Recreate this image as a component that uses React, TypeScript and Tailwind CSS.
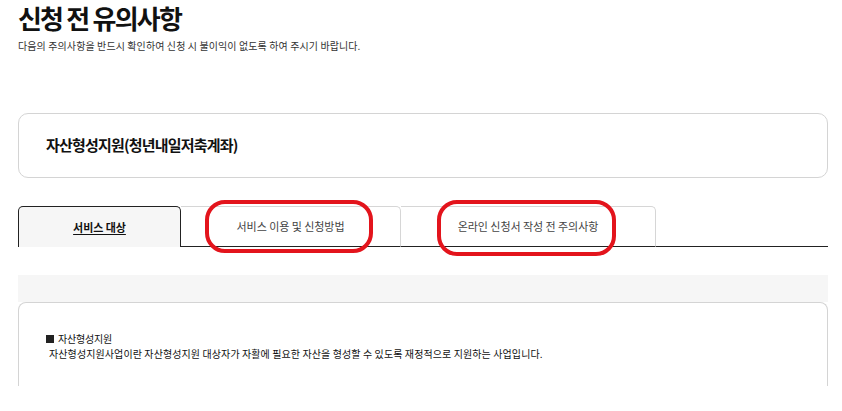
import React from 'react';

const font = { fontFamily: '"Noto Sans CJK KR", "Noto Sans", sans-serif' };

function Tab({ label, active, width, ring }: { label: string; active?: boolean; width: string; ring?: string }) {
  if (active) {
    return (
      <div className={`${width} h-[41px] flex items-center justify-center rounded-t-[5px] border border-b-0 border-[#222] bg-[#f6f6f6]`}>
        <span className="text-[11px] font-bold text-[#111] underline underline-offset-2 tracking-[-0.05px]">{label}</span>
      </div>
    );
  }
  return (
    <div className={`${width} relative h-[41px] flex items-center justify-center rounded-tr-[5px] border-t border-r border-[#d6d6d6] border-b border-b-[#222]`}>
      <span className="text-[11px] text-[#444] tracking-[-0.05px]">{label}</span>
      {ring && <div className={`absolute ${ring} rounded-[20px] border-[4px] border-[#e3141c]`} />}
    </div>
  );
}

export default function App() {
  return (
    <div className="w-[842px] h-[411px] bg-white overflow-hidden" style={font}>
      <div className="pl-[18px] w-[828px]">
        <h1 className="pt-[1px] text-[26px] font-bold leading-[34px] text-[#111] tracking-[-1.8px]">신청 전 유의사항</h1>
        <p className="mt-[4px] text-[10px] leading-[14px] text-[#333] tracking-[0.1px]">
          다음의 주의사항을 반드시 확인하여 신청 시 불이익이 없도록 하여 주시기 바랍니다.
        </p>

        <div className="mt-[60px] h-[65px] rounded-[10px] border border-[#d4d4d4] flex items-center pl-[27px]">
          <h2 className="text-[15px] font-bold text-[#111] tracking-[-0.8px]">자산형성지원(청년내일저축계좌)</h2>
        </div>

        <div className="mt-[28px] flex">
          <Tab label="서비스 대상" active width="w-[163px]" />
          <Tab label="서비스 이용 및 신청방법" width="w-[220px]" ring="left-[24px] top-[-7px] w-[168px] h-[53px]" />
          <Tab label="온라인 신청서 작성 전 주의사항" width="w-[255px]" ring="left-[36px] top-[-7px] w-[179px] h-[56px]" />
          <div className="flex-1 h-[41px] border-b border-[#222]" />
        </div>

        <div className="mt-[28px] h-[27px] bg-[#f6f6f6]" />

        <div className="h-[84px] rounded-t-[8px] border border-b-0 border-[#d4d4d4] pt-[28px] pl-[27px]">
          <p className="text-[10px] leading-[15px] text-[#111] tracking-[-0.2px] flex items-center">
            <span className="inline-block w-[8px] h-[8px] bg-[#222] mr-[4px]" />
            자산형성지원
          </p>
          <p className="pl-[3px] text-[10px] leading-[15px] text-[#111] tracking-[0.1px]">
            자산형성지원사업이란 자산형성지원 대상자가 자활에 필요한 자산을 형성할 수 있도록 재정적으로 지원하는 사업입니다.
          </p>
        </div>
      </div>
    </div>
  );
}
